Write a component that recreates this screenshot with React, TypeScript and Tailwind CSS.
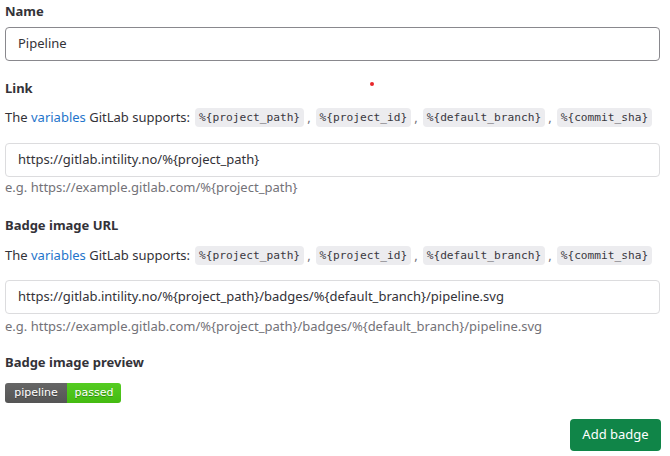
import React from "react";

const vars = ["%{project_path}", "%{project_id}", "%{default_branch}", "%{commit_sha}"];

const Label = ({ children, className = "" }: { children: React.ReactNode; className?: string }) => (
  <div className={`text-[13px] leading-[20px] font-bold text-[#333238] ${className}`}>{children}</div>
);

const Help = ({ className = "" }: { className?: string }) => (
  <div className={`flex items-center whitespace-nowrap text-[13px] leading-[20px] text-[#333238] ${className}`}>
    <span>
      The <span className="text-[#1f75cb]">variables</span> GitLab supports:
    </span>
    {vars.map((v, i) => (
      <React.Fragment key={v}>
        <code className="ml-[5px] rounded-[4px] bg-[#ececef] px-[4px] py-[1px] font-['DejaVu_Sans_Mono',monospace] text-[11.2px] font-normal leading-[17px] text-[#3a383f]">
          {v}
        </code>
        {i < vars.length - 1 && <span className="ml-[3px] text-[#737278]">,</span>}
      </React.Fragment>
    ))}
  </div>
);

const Field = ({ value, strong = false }: { value: string; strong?: boolean }) => (
  <div
    className={`flex h-[34px] items-center rounded-[4px] border bg-white px-[12px] text-[13px] text-[#333238] ${
      strong ? "border-[#89888d]" : "border-[#dcdcde]"
    }`}
  >
    {value}
  </div>
);

export default function App() {
  return (
    <div className="relative min-h-[456px] w-[670px] bg-white font-['Noto_Sans',sans-serif]">
      {/* stray cursor dot */}
      <span className="absolute left-[370px] top-[82px] h-[4px] w-[4px] rounded-full bg-[#e8262b]" />
      <div className="w-[660px] pl-[5px] pt-[1px]">
        <Label>Name</Label>
        <div className="mt-[6px]">
          <Field value="Pipeline" strong />
        </div>

        <Label className="mt-[17px]">Link</Label>
        <Help className="mt-[9px]" />
        <div className="mt-[16px]">
          <Field value="https://gitlab.intility.no/%{project_path}" />
        </div>
        <div className="text-[13px] leading-[20px] text-[#737278]">
          e.g. https://example.gitlab.com/%{"{project_path}"}
        </div>

        <Label className="mt-[18px]">Badge image URL</Label>
        <Help className="mt-[10px]" />
        <div className="mt-[15px]">
          <Field value="https://gitlab.intility.no/%{project_path}/badges/%{default_branch}/pipeline.svg" />
        </div>
        <div className="mt-[2px] text-[13px] leading-[20px] text-[#737278]">
          e.g. https://example.gitlab.com/%{"{project_path}"}/badges/%{"{default_branch}"}/pipeline.svg
        </div>

        <Label className="mt-[16px]">Badge image preview</Label>
        <div className="mt-[11px] flex h-[20px] w-[116px] overflow-hidden rounded-[3px] font-['DejaVu_Sans',sans-serif] text-[11px] text-white [text-shadow:0_1px_0_rgba(1,1,1,0.3)]">
          <div className="flex w-[62px] items-center justify-center bg-gradient-to-b from-[#666] to-[#555]">pipeline</div>
          <div className="flex flex-1 items-center justify-center bg-gradient-to-b from-[#55cc22] to-[#44bb11]">passed</div>
        </div>

        <div className="mt-[16px] flex justify-end">
          <button className="-mr-[1px] h-[32px] w-[91px] rounded-[4px] bg-[#108548] text-[13px] text-white">
            Add badge
          </button>
        </div>
      </div>
    </div>
  );
}
